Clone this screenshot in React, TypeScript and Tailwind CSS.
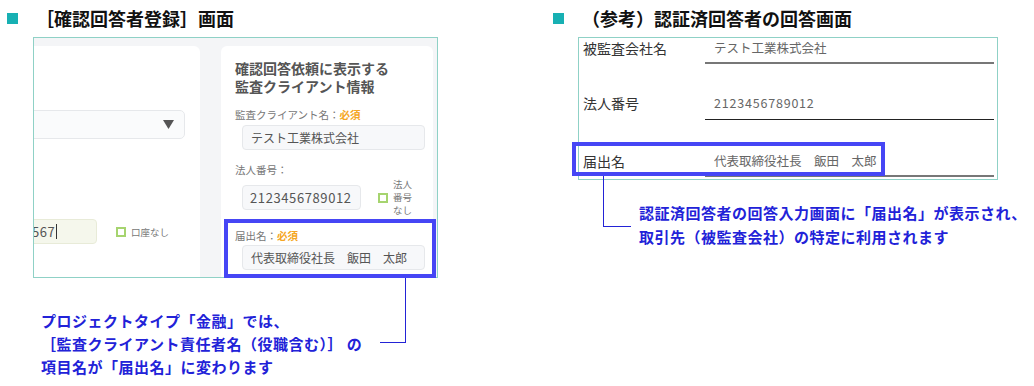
import React from "react";

const FONT = '"Noto Sans CJK JP", "Noto Sans", sans-serif';

function Header({ text, className }: { text: string; className?: string }) {
  return (
    <div className={"flex items-center h-[20px] mt-[8px] " + (className ?? "")}>
      <div className="w-[11px] h-[11px] bg-[#17b0b3]" />
      <div className="ml-[18px] text-[18px] leading-[20px] font-bold text-[#111]">{text}</div>
    </div>
  );
}

function Checkbox() {
  return <div className="w-[10px] h-[10px] border-2 border-[#a6d46f] bg-white shrink-0" />;
}

function LeftScreen() {
  return (
    <div className="ml-[33px] mt-[9px] w-[405px] h-[241px] border border-[#8fd1c6] bg-[#f4f5f7] overflow-hidden">
      <div className="flex h-full pt-[8px]">
        {/* left card */}
        <div className="w-[166px] h-full bg-white rounded-tr-[6px] overflow-hidden">
          <div className="mt-[64px] -ml-[20px] w-[171px] h-[29px] border border-[#e6e8eb] rounded-[5px] bg-[#fafbfc] flex items-center justify-end pr-[10px]">
            <svg width="11" height="9" viewBox="0 0 11 9">
              <polygon points="0,0 11,0 5.5,9" fill="#555" />
            </svg>
          </div>
          <div className="mt-[80px] flex items-center">
            <div className="-ml-[20px] w-[83px] h-[25px] border border-[#e8ebd8] rounded-[4px] bg-[#f5f7ec] flex items-center pl-[17px]">
              <span className="text-[13px] leading-[25px] text-[#555] tracking-[0.5px]">567</span>
              <span className="w-[1px] h-[15px] bg-[#333] ml-[1px]" />
            </div>
            <div className="ml-[19px]">
              <Checkbox />
            </div>
            <span className="ml-[5px] text-[9.5px] leading-[12px] text-[#777]">口座なし</span>
          </div>
        </div>
        {/* right card */}
        <div className="ml-[21px] w-[212px] h-full bg-white rounded-t-[6px] pl-[14px] pt-[13px]">
          <div className="text-[14px] leading-[18px] font-bold text-[#555]">
            確認回答依頼に表示する
            <br />
            監査クライアント情報
          </div>
          <div className="mt-[13px] text-[10.5px] leading-[14px] text-[#777]">
            監査クライアント名：<span className="text-[#f5a623] font-bold">必須</span>
          </div>
          <div className="mt-[3px] ml-[7px] w-[183px] h-[25px] border border-[#e6e8eb] rounded-[4px] bg-[#f7f8fa] pl-[8px] text-[12px] leading-[23px] text-[#555]">
            テスト工業株式会社
          </div>
          <div className="mt-[13px] text-[10.5px] leading-[14px] text-[#777]">法人番号：</div>
          <div className="mt-[1px] flex items-center">
            <div className="ml-[7px] w-[119px] h-[25px] border border-[#e6e8eb] rounded-[4px] bg-[#f7f8fa] pl-[7px] text-[13px] leading-[23px] text-[#555] tracking-[0.6px]">
              2123456789012
            </div>
            <div className="ml-[17px]">
              <Checkbox />
            </div>
            <div className="ml-[5px] flex flex-col items-center text-[9.5px] leading-[13px] text-[#777]">
              <span>法人</span>
              <span>番号</span>
              <span>なし</span>
            </div>
          </div>
          <div className="mt-[12px] text-[10.5px] leading-[14px] text-[#777]">
            届出名：<span className="text-[#f5a623] font-bold">必須</span>
          </div>
          <div className="mt-[2px] ml-[7px] w-[183px] h-[25px] border border-[#e6e8eb] rounded-[4px] bg-[#f7f8fa] pl-[8px] text-[12px] leading-[23px] text-[#555] whitespace-pre">
            代表取締役社長　飯田　太郎
          </div>
        </div>
      </div>
    </div>
  );
}

function RightScreen() {
  return (
    <div className="ml-[38px] mt-[9px] w-[420px] h-[143px] border border-[#8fd1c6] bg-white px-[3px] pb-[3px]">
      <div className="flex h-[26px]">
        <div className="w-[123px] pl-[1px] text-[14px] leading-[20px] text-[#333]">被監査会社名</div>
        <div className="flex-1 border-b-2 border-[#777] pl-[9px] text-[12.5px] leading-[20px] text-[#666]">
          テスト工業株式会社
        </div>
      </div>
      <div className="flex h-[56px] pt-[29px]">
        <div className="w-[123px] pl-[1px] text-[14px] leading-[20px] text-[#333]">法人番号</div>
        <div className="flex-1 border-b border-[#222] pl-[9px] text-[12.5px] leading-[20px] text-[#666] tracking-[0.8px]">
          2123456789012
        </div>
      </div>
      <div className="flex h-[57px] pt-[31px]">
        <div className="w-[123px] pl-[1px] text-[14px] leading-[20px] text-[#333]">届出名</div>
        <div className="flex-1 border-b-2 border-[#777] pl-[9px] text-[12.5px] leading-[20px] text-[#666] whitespace-pre">
          代表取締役社長　飯田　太郎
        </div>
      </div>
    </div>
  );
}

export default function App() {
  return (
    <div className="relative w-[1034px] h-[386px] bg-white overflow-hidden" style={{ fontFamily: FONT }}>
      <div className="flex">
        <div className="w-[540px] shrink-0">
          <Header text="［確認回答者登録］画面" className="ml-[7px]" />
          <LeftScreen />
          <div className="ml-[41px] mt-[31px] text-[15px] leading-[23px] font-bold text-[#2222d8] tracking-[0.5px] whitespace-pre">
            {"プロジェクトタイプ「金融」では、\n［監査クライアント責任者名（役職含む）］ の\n項目名が「届出名」に変わります"}
          </div>
        </div>
        <div className="flex-1">
          <Header text="（参考）認証済回答者の回答画面" className="ml-[13px]" />
          <RightScreen />
          <div className="ml-[99px] mt-[21px] text-[15px] leading-[24px] font-bold text-[#2222d8] tracking-[0.5px] whitespace-pre">
            {"認証済回答者の回答入力画面に「届出名」が表示され、\n取引先（被監査会社）の特定に利用されます"}
          </div>
        </div>
      </div>

      {/* highlight boxes */}
      <div className="absolute left-[224px] top-[219px] w-[212px] h-[59px] border-4 border-[#4646f5]" />
      <div className="absolute left-[572px] top-[142px] w-[313px] h-[34px] border-4 border-[#4646f5]" />

      {/* connectors */}
      <div className="absolute left-[405px] top-[278px] w-[1px] h-[65px] bg-[#2323d6]" />
      <div className="absolute left-[380px] top-[342px] w-[26px] h-[1px] bg-[#2323d6]" />
      <div className="absolute left-[603px] top-[176px] w-[1px] h-[51px] bg-[#2323d6]" />
      <div className="absolute left-[603px] top-[226px] w-[28px] h-[1px] bg-[#2323d6]" />
    </div>
  );
}
